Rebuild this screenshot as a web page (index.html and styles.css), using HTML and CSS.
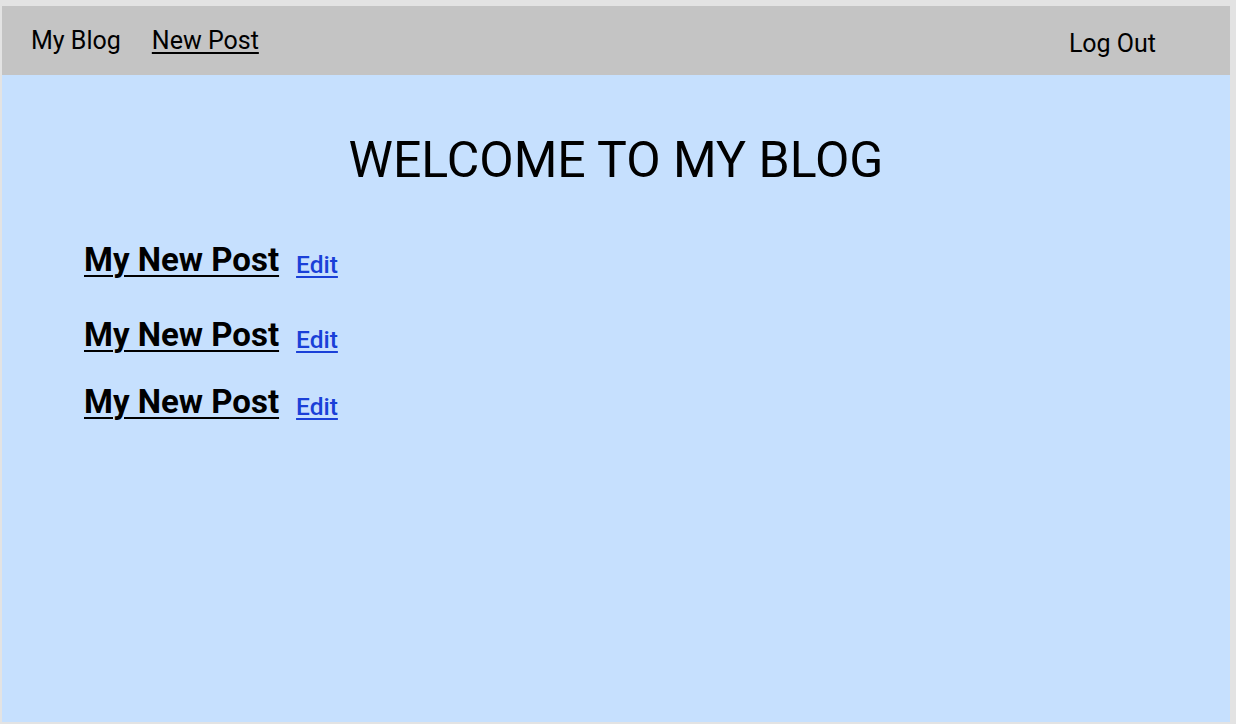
FILE: index.html
```html
<!DOCTYPE html>
<html lang="en">
<head>
<meta charset="utf-8">
<title>My Blog</title>
<link rel="stylesheet" href="styles.css">
</head>
<body>
<div class="frame">
  <header class="topbar">
    <nav class="nav-left">
      <a class="nav-link plain" href="#">My Blog</a>
      <a class="nav-link" href="#">New Post</a>
    </nav>
    <a class="nav-link plain logout" href="#">Log Out</a>
  </header>
  <main class="content">
    <h1 class="title">WELCOME TO MY BLOG</h1>
    <ul class="posts">
      <li class="post"><a class="post-title" href="#">My New Post</a><a class="edit" href="#">Edit</a></li>
      <li class="post"><a class="post-title" href="#">My New Post</a><a class="edit" href="#">Edit</a></li>
      <li class="post"><a class="post-title" href="#">My New Post</a><a class="edit" href="#">Edit</a></li>
    </ul>
  </main>
</div>
</body>
</html>
```
FILE: styles.css
```css
html, body {
  margin: 0;
  height: 100%;
}
body {
  background: #e3e3e3;
  font-family: Roboto, "Liberation Sans", sans-serif;
  color: #000;
  padding: 6px 6px 2px 2px;
  box-sizing: border-box;
}
.frame {
  height: 100%;
  display: flex;
  flex-direction: column;
}
.topbar {
  height: 69px;
  flex: none;
  background: #c4c4c4;
  display: flex;
  align-items: center;
  justify-content: space-between;
  padding: 0 74px 0 29px;
}
.nav-left {
  display: flex;
  gap: 31px;
}
.nav-link {
  font-size: 25px;
  color: #000;
  text-decoration: underline;
  text-decoration-thickness: 2px;
  text-underline-offset: 3px;
}
.nav-link.plain {
  text-decoration: none;
}
.logout {
  margin-top: 6px;
}
.content {
  flex: 1;
  background: #c6e0fe;
  padding-top: 55px;
}
.title {
  margin: 0;
  text-align: center;
  font-size: 50px;
  font-weight: 400;
  line-height: 60px;
}
.posts {
  list-style: none;
  margin: 0;
  padding: 50px 0 0 82px;
}
.post {
  display: flex;
  align-items: flex-end;
  gap: 17px;
  margin-bottom: 28px;
}
.post:first-child {
  margin-bottom: 36px;
}
.post-title {
  font-size: 33px;
  font-weight: 700;
  color: #000;
  text-decoration: underline;
  text-decoration-thickness: 2px;
  text-underline-offset: 4px;
}
.edit {
  font-size: 24.5px;
  font-weight: 500;
  color: #1a40d8;
  text-decoration: underline;
  text-decoration-thickness: 2px;
  text-underline-offset: 3px;
  margin-bottom: 0;
}
```
